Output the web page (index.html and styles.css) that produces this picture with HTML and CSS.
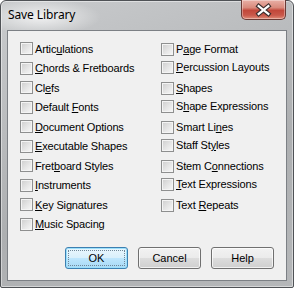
FILE: index.html
```
<!DOCTYPE html>
<html lang="en">
<head>
    <meta charset="UTF-8">
    <title>Save Library</title>
    <link rel="stylesheet" href="styles.css">
</head>
<body>

    <div class="window">
        <div class="titlebar">
            <span class="title">Save Library</span>
            <button class="close" title="Close">
                <svg width="44" height="18" viewBox="0 0 44 18">
                    <path d="M17 5 L27 13 M27 5 L17 13" stroke="#3b2d2d" stroke-width="4.5" stroke-linecap="square"/>
                    <path d="M17 5 L27 13 M27 5 L17 13" stroke="#ffffff" stroke-width="2.2" stroke-linecap="square"/>
                </svg>
            </button>
        </div>

        <div class="client">
            <div class="lists">
                <div class="col left">
                    <label class="item"><span class="box"></span><span>Artic<u>u</u>lations</span></label>
                    <label class="item"><span class="box"></span><span><u>C</u>hords &amp; Fretboards</span></label>
                    <label class="item"><span class="box"></span><span>Cl<u>e</u>fs</span></label>
                    <label class="item"><span class="box"></span><span>Default <u>F</u>onts</span></label>
                    <label class="item"><span class="box"></span><span><u>D</u>ocument Options</span></label>
                    <label class="item"><span class="box"></span><span><u>E</u>xecutable Shapes</span></label>
                    <label class="item"><span class="box"></span><span>Fret<u>b</u>oard Styles</span></label>
                    <label class="item"><span class="box"></span><span><u>I</u>nstruments</span></label>
                    <label class="item"><span class="box"></span><span><u>K</u>ey Signatures</span></label>
                    <label class="item"><span class="box"></span><span><u>M</u>usic Spacing</span></label>
                </div>
                <div class="col right">
                    <label class="item"><span class="box"></span><span>P<u>a</u>ge Format</span></label>
                    <label class="item"><span class="box"></span><span><u>P</u>ercussion Layouts</span></label>
                    <label class="item sep"><span class="box"></span><span><u>S</u>hapes</span></label>
                    <label class="item"><span class="box"></span><span>S<u>h</u>ape Expressions</span></label>
                    <label class="item sep"><span class="box"></span><span>Smart Li<u>n</u>es</span></label>
                    <label class="item"><span class="box"></span><span>Staff St<u>y</u>les</span></label>
                    <label class="item sep"><span class="box"></span><span>Stem C<u>o</u>nnections</span></label>
                    <label class="item"><span class="box"></span><span><u>T</u>ext Expressions</span></label>
                    <label class="item sep"><span class="box"></span><span>Text <u>R</u>epeats</span></label>
                </div>
            </div>

            <div class="buttons">
                <button class="btn default">OK</button>
                <button class="btn">Cancel</button>
                <button class="btn">Help</button>
            </div>
        </div>
    </div>

</body>
</html>
```

FILE: styles.css
```
body {
    margin: 0;
    font-family: "Liberation Sans", Arial, sans-serif;
    font-size: 11px;
    color: #000;
    background: #fff;
}
/* window frame */
.window {
    width: 294px;
    height: 288px;
    box-sizing: border-box;
    border: 1px solid #4f5256;
    border-radius: 6px 6px 2px 2px;
    background:
        radial-gradient(ellipse 60px 18px at 40px 16px, rgba(255, 255, 255, 0.75), rgba(255, 255, 255, 0)),
        linear-gradient(160deg, #c9cbcd 0%, #b9bbbd 35%, #adafb1 60%, #b5b7b9 100%);
    box-shadow: inset 0 0 0 1px rgba(255, 255, 255, 0.45);
    display: flex;
    flex-direction: column;
}
.titlebar {
    height: 29px;
    display: flex;
    align-items: flex-start;
    padding-left: 7px;
}
.title {
    font-family: "Noto Sans", "Open Sans", sans-serif;
    font-size: 12px;
    line-height: 16px;
    margin-top: 6px;
    letter-spacing: -0.1px;
}
.close {
    margin-left: auto;
    margin-right: 7px;
    margin-top: -1px;
    width: 45px;
    height: 20px;
    padding: 0;
    border: 1px solid #6b3a35;
    border-top: none;
    border-radius: 0 0 5px 5px;
    background: linear-gradient(to bottom, #e9b0a6 0%, #d98a7c 40%, #c2473a 55%, #c9584a 80%, #e08c78 100%);
    box-shadow: inset 0 0 0 1px rgba(255, 255, 255, 0.35);
    display: flex;
    align-items: center;
    justify-content: center;
}
.close svg {
    display: block;
}
/* dialog body */
.client {
    flex: 1;
    margin: 0 6px 6px;
    border: 1px solid #7c8085;
    background: #f0f0f0;
    display: flex;
    flex-direction: column;
}
.lists {
    display: flex;
    padding: 8px 0 0 12px;
}
.col {
    display: flex;
    flex-direction: column;
}
.left {
    width: 141px;
}
.left .item {
    height: 19.5px;
}
.right {
    margin-top: 1px;
}
.right .item {
    height: 18px;
}
.right .sep {
    margin-top: 3px;
}
.item {
    display: flex;
    align-items: center;
    white-space: nowrap;
    letter-spacing: -0.15px;
}
.item u {
    text-decoration: underline;
    text-underline-offset: 1px;
}
.box {
    width: 11px;
    height: 11px;
    border: 1px solid #8e8f8f;
    margin-right: 2px;
    background: linear-gradient(135deg, #cdcdcd 0%, #e6e6e6 55%, #f8f8f8 100%);
    box-shadow: inset 0 0 0 1px #f4f4f4;
}
/* button row */
.buttons {
    display: flex;
    justify-content: flex-end;
    gap: 10px;
    margin-top: 13px;
    padding-right: 12px;
}
.btn {
    width: 63px;
    height: 22px;
    padding: 0;
    font-family: inherit;
    font-size: 11px;
    color: #000;
    border: 1px solid #707070;
    border-radius: 3px;
    background: linear-gradient(to bottom, #f2f2f2 0%, #ebebeb 50%, #dddddd 51%, #cfcfcf 100%);
    box-shadow: inset 0 0 0 1px rgba(255, 255, 255, 0.7);
}
.btn.default {
    border-color: #3c7fb1;
    background: linear-gradient(to bottom, #eaf6fd 0%, #d9f0fc 50%, #bee6fd 51%, #a7d9f5 100%);
    box-shadow: inset 0 0 0 1px #9de0fb;
    outline: 1px dotted #6f8798;
    outline-offset: -4px;
}
```
